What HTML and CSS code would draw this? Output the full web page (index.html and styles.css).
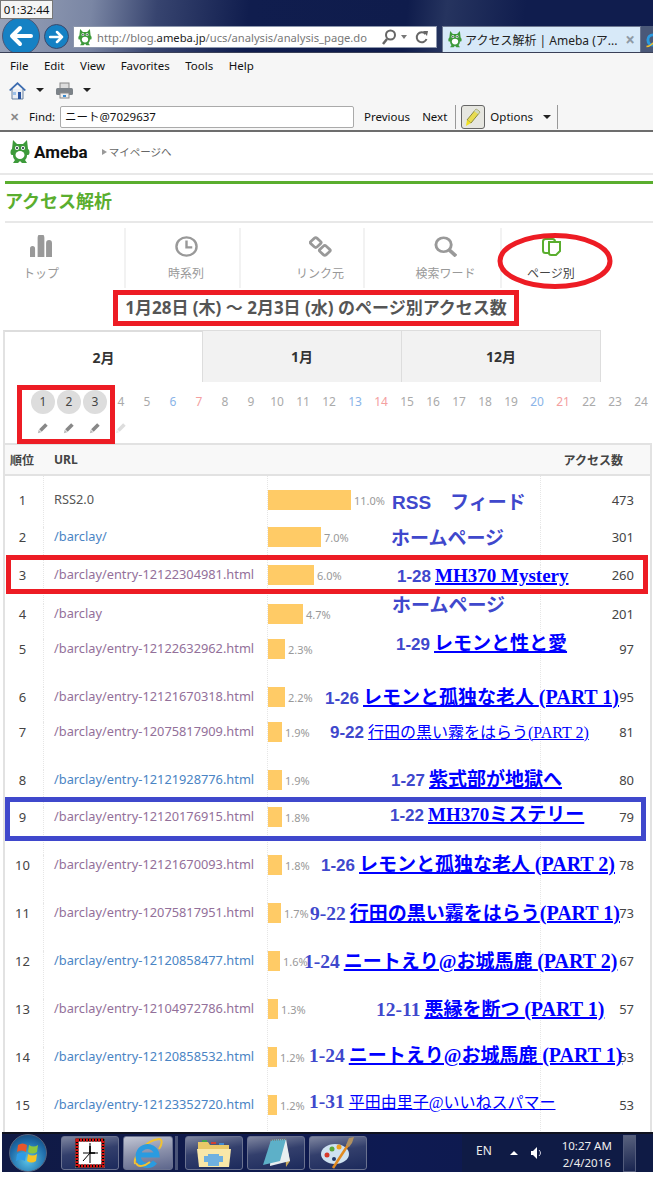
FILE: index.html
```html
<!DOCTYPE html>
<html lang="ja">
<head>
    <meta charset="UTF-8">
    <meta name="viewport" content="width=device-width, initial-scale=1.0">
    <link rel="stylesheet" href="styles.css">
    <title>アクセス解析 | Ameba</title>
</head>
<body>

<svg class="defs" width="0" height="0">
    <symbol id="ameba" viewBox="0 0 20 24">
        <path fill="#3d9a3a" d="M3 0l4 4h6l4-4 1 9c2 1 2 6 0 6l-1 0c0 3-1 4-2 5l2 3h-5l-2-2-2 2H3l2-3c-1-1-2-2-2-5H2C0 15 0 10 2 9z"/>
        <ellipse fill="#fff" cx="10" cy="15" rx="4.500" ry="4"/>
        <circle fill="#fff" cx="7" cy="8" r="2"/>
        <circle fill="#fff" cx="13" cy="8" r="2"/>
        <circle fill="#123" cx="7" cy="8" r="1"/>
        <circle fill="#123" cx="13" cy="8" r="1"/>
    </symbol>
    <symbol id="pencil" viewBox="0 0 14 14">
        <path fill="currentColor" d="M9.500 1.500l3 3-7 7-3-3z"/>
        <path fill="currentColor" opacity=".6" d="M2 9l3 3-4 1z"/>
    </symbol>
</svg>

<div class="screen">

    <!-- browser frame -->
    <div class="clock-box">01:32:44</div>

    <div class="nav-bar">
        <div class="btn-back">
            <svg width="24" height="22" viewBox="0 0 24 22"><path fill="none" stroke="#fff" stroke-width="4" stroke-linecap="round" stroke-linejoin="round" d="M22 11H4M11 3l-8 8 8 8"/></svg>
        </div>
        <div class="btn-forward">
            <svg width="15" height="14" viewBox="0 0 15 14"><path fill="none" stroke="#fff" stroke-width="2.500" stroke-linecap="round" stroke-linejoin="round" d="M1 7h12M8 2l5 5-5 5"/></svg>
        </div>
        <div class="address">
            <svg class="fav" width="14" height="17"><use href="#ameba"/></svg>
            <span class="url">http://blog.<b>ameba.jp</b>/ucs/analysis/analysis_page.do</span>
            <svg class="addr-icon" width="16" height="16" viewBox="0 0 16 16"><circle cx="9.500" cy="6" r="4.500" fill="none" stroke="#666" stroke-width="2"/><path d="M6 10l-4 5" stroke="#666" stroke-width="2.500"/></svg>
            <span class="addr-caret"></span>
            <svg class="addr-icon" width="13" height="15" viewBox="0 0 13 15"><path d="M10.500 4A5 5 0 1 0 11.500 9" fill="none" stroke="#666" stroke-width="2"/><path fill="#666" d="M8 1l5 0-1 5z"/></svg>
        </div>
        <div class="tab-active">
            <svg class="fav" width="14" height="17"><use href="#ameba"/></svg>
            <span class="tab-title">アクセス解析 | Ameba (ア...</span>
            <span class="tab-close">×</span>
        </div>
        <div class="tab-new">
            <svg width="16" height="16" viewBox="0 0 22 22"><circle cx="11" cy="11" r="7" fill="none" stroke="#2a9be0" stroke-width="4"/><path d="M2 20C8 20 18 10 20 2" fill="none" stroke="#f0c030" stroke-width="2"/></svg>
        </div>
    </div>

    <div class="menu-bar">
        <span>File</span><span>Edit</span><span>View</span><span>Favorites</span><span>Tools</span><span>Help</span>
    </div>

    <div class="tool-bar">
        <svg width="17" height="19" viewBox="0 0 17 19"><path fill="#e9edf3" stroke="#67809f" d="M3 8v10h11V8"/><path fill="#3c6cb0" d="M8.500 1L0 9l1.500 1 7-6.500 7 6.500L17 9z"/><rect fill="#2a55a0" x="9" y="11" width="3" height="7"/><rect fill="#9cc0e8" x="4" y="11" width="3" height="3"/></svg>
        <span class="caret"></span>
        <svg class="printer" width="17" height="17" viewBox="0 0 17 17"><rect fill="#ddd" stroke="#888" x="4" y="1" width="9" height="6"/><rect fill="#7c8288" x="0" y="6" width="17" height="7" rx="1.500"/><rect fill="#eee" stroke="#888" x="4" y="11" width="9" height="5"/><rect fill="#3a8ad0" x="7" y="13" width="3" height="2"/></svg>
        <span class="caret"></span>
    </div>

    <div class="find-bar">
        <span class="find-x">✕</span>
        <span class="find-label">Find:</span>
        <div class="find-input">ニート@7029637</div>
        <span class="find-link">Previous</span>
        <span class="find-link find-next">Next</span>
        <span class="find-sep"></span>
        <div class="find-mark">
            <svg width="18" height="20" viewBox="0 0 18 20"><path fill="#e8dc50" stroke="#8a8a40" d="M12 2l4 3-9 11-4-3z"/><path fill="#f0e020" d="M3 13l4 3-5 3z"/><path fill="#cfd8c0" d="M12 2l4 3-2 2-4-3z"/></svg>
        </div>
        <span class="find-link find-options">Options</span>
        <span class="caret"></span>
        <span class="find-sep find-sep-end"></span>
    </div>

    <!-- page -->
    <div class="page">
        <div class="site-header">
            <svg width="20" height="24"><use href="#ameba"/></svg>
            <span class="logo-text">Ameba</span>
            <span class="mypage"><i class="mypage-arrow"></i>マイページへ</span>
        </div>

        <div class="report">
            <h1 class="report-title">アクセス解析</h1>

            <div class="report-nav">
                <div class="nav-item nav-top">
                    <svg width="22" height="22" viewBox="0 0 26 24" preserveAspectRatio="none"><path fill="#999" d="M0 15a3 3 0 0 1 6 0v9H0zM9 3a4 4 0 0 1 8 0v21H9zM19 9a3.500 3.500 0 0 1 7 0v15h-7z"/></svg>
                    <span>トップ</span>
                </div>
                <div class="nav-item nav-time">
                    <svg width="23" height="21" viewBox="0 0 24 24" preserveAspectRatio="none"><circle cx="12" cy="12" r="10.500" fill="none" stroke="#999" stroke-width="2.500"/><path d="M12 5v8h6" fill="none" stroke="#999" stroke-width="2.500"/></svg>
                    <span>時系列</span>
                </div>
                <div class="nav-item nav-link">
                    <svg width="23" height="21" viewBox="0 0 24 24" preserveAspectRatio="none"><g fill="none" stroke="#999" stroke-width="3"><rect x="2.500" y="3" width="9" height="9" rx="2" transform="rotate(45 7 7.500)"/><rect x="12" y="12" width="9" height="9" rx="2" transform="rotate(45 16.500 16.500)"/></g></svg>
                    <span>リンク元</span>
                </div>
                <div class="nav-item nav-word">
                    <svg width="23" height="21" viewBox="0 0 24 24" preserveAspectRatio="none"><circle cx="10" cy="10" r="8" fill="none" stroke="#999" stroke-width="3"/><path d="M16 16l7 7" stroke="#999" stroke-width="4"/></svg>
                    <span>検索ワード</span>
                </div>
                <div class="nav-item nav-page">
                    <svg width="19" height="18" viewBox="0 0 19 18"><g fill="#fff" stroke="#5aae2e" stroke-width="2"><rect x="1" y="1" width="12" height="14" rx="2.500"/><path d="M7 4h11v9l-4 4H9a2 2 0 0 1-2-2z"/></g></svg>
                    <span>ページ別</span>
                </div>
            </div>
        </div>

        <h2 class="period">1月28日 (木) ～ 2月3日 (水) のページ別アクセス数</h2>

        <div class="panel">
            <div class="months">
                <div class="month active">2月</div>
                <div class="month">1月</div>
                <div class="month">12月</div>
                <div class="month-rest"></div>
            </div>

            <div class="days">
                <div class="day on">1<svg class="pen" width="12" height="12"><use href="#pencil"/></svg></div>
                <div class="day on">2<svg class="pen" width="12" height="12"><use href="#pencil"/></svg></div>
                <div class="day on">3<svg class="pen" width="12" height="12"><use href="#pencil"/></svg></div>
                <div class="day">4<svg class="pen pen-faint" width="12" height="12"><use href="#pencil"/></svg></div>
                <div class="day">5</div>
                <div class="day sat">6</div>
                <div class="day sun">7</div>
                <div class="day">8</div>
                <div class="day">9</div>
                <div class="day">10</div>
                <div class="day">11</div>
                <div class="day">12</div>
                <div class="day sat">13</div>
                <div class="day sun">14</div>
                <div class="day">15</div>
                <div class="day">16</div>
                <div class="day">17</div>
                <div class="day">18</div>
                <div class="day">19</div>
                <div class="day sat">20</div>
                <div class="day sun">21</div>
                <div class="day">22</div>
                <div class="day">23</div>
                <div class="day">24</div>
            </div>

            <div class="stats-head">
                <span class="head-rank">順位</span>
                <span class="head-url">URL</span>
                <span class="head-count">アクセス数</span>
            </div>

            <div class="stats">
                <div class="row"><div class="rank">1</div><div class="path plain">RSS2.0</div><div class="graph"><i class="bar" style="width:83px"></i><span class="pct">11.0%</span></div><div class="count">473</div></div>
                <div class="row"><div class="rank">2</div><div class="path new">/barclay/</div><div class="graph"><i class="bar" style="width:53px"></i><span class="pct">7.0%</span></div><div class="count">301</div></div>
                <div class="row"><div class="rank">3</div><div class="path">/barclay/entry-12122304981.html</div><div class="graph"><i class="bar" style="width:46px"></i><span class="pct">6.0%</span></div><div class="count">260</div></div>
                <div class="row"><div class="rank">4</div><div class="path">/barclay</div><div class="graph"><i class="bar" style="width:35px"></i><span class="pct">4.7%</span></div><div class="count">201</div></div>
                <div class="row"><div class="rank">5</div><div class="path">/barclay/entry-12122632962.html</div><div class="graph"><i class="bar" style="width:17px"></i><span class="pct">2.3%</span></div><div class="count">97</div></div>
                <div class="row"><div class="rank">6</div><div class="path">/barclay/entry-12121670318.html</div><div class="graph"><i class="bar" style="width:17px"></i><span class="pct">2.2%</span></div><div class="count">95</div></div>
                <div class="row"><div class="rank">7</div><div class="path">/barclay/entry-12075817909.html</div><div class="graph"><i class="bar" style="width:14px"></i><span class="pct">1.9%</span></div><div class="count">81</div></div>
                <div class="row"><div class="rank">8</div><div class="path new">/barclay/entry-12121928776.html</div><div class="graph"><i class="bar" style="width:14px"></i><span class="pct">1.9%</span></div><div class="count">80</div></div>
                <div class="row"><div class="rank">9</div><div class="path">/barclay/entry-12120176915.html</div><div class="graph"><i class="bar" style="width:14px"></i><span class="pct">1.8%</span></div><div class="count">79</div></div>
                <div class="row"><div class="rank">10</div><div class="path">/barclay/entry-12121670093.html</div><div class="graph"><i class="bar" style="width:14px"></i><span class="pct">1.8%</span></div><div class="count">78</div></div>
                <div class="row"><div class="rank">11</div><div class="path">/barclay/entry-12075817951.html</div><div class="graph"><i class="bar" style="width:13px"></i><span class="pct">1.7%</span></div><div class="count">73</div></div>
                <div class="row"><div class="rank">12</div><div class="path new">/barclay/entry-12120858477.html</div><div class="graph"><i class="bar" style="width:12px"></i><span class="pct">1.6%</span></div><div class="count">67</div></div>
                <div class="row"><div class="rank">13</div><div class="path">/barclay/entry-12104972786.html</div><div class="graph"><i class="bar" style="width:10px"></i><span class="pct">1.3%</span></div><div class="count">57</div></div>
                <div class="row"><div class="rank">14</div><div class="path new">/barclay/entry-12120858532.html</div><div class="graph"><i class="bar" style="width:9px"></i><span class="pct">1.2%</span></div><div class="count">53</div></div>
                <div class="row"><div class="rank">15</div><div class="path new">/barclay/entry-12123352720.html</div><div class="graph"><i class="bar" style="width:9px"></i><span class="pct">1.2%</span></div><div class="count">53</div></div>
            </div>
        </div>
    </div>

    <!-- hand drawn marks on top of the page -->
    <svg class="mark-ellipse" width="116" height="58" viewBox="0 0 116 58"><ellipse cx="58" cy="29" rx="55" ry="25.500" fill="none" stroke="#ed1c24" stroke-width="5"/></svg>
    <div class="mark mark-days"></div>
    <div class="mark mark-row3"></div>
    <div class="mark mark-row9"></div>

    <div class="note note-1"><span class="tag big">RSS　フィード</span></div>
    <div class="note note-2"><span class="tag big">ホームページ</span></div>
    <div class="note note-3"><span class="tag">1-28</span><a class="title">MH370 Mystery</a></div>
    <div class="note note-4"><span class="tag big">ホームページ</span></div>
    <div class="note note-5"><span class="tag">1-29</span><a class="title">レモンと性と愛</a></div>
    <div class="note note-6"><span class="tag">1-26</span><a class="title">レモンと孤独な老人 <span class="part">(PART 1)</span></a></div>
    <div class="note note-7"><span class="tag">9-22</span><a class="title thin">行田の黒い霧をはらう(PART 2)</a></div>
    <div class="note note-8"><span class="tag">1-27</span><a class="title">紫式部が地獄へ</a></div>
    <div class="note note-9"><span class="tag">1-22</span><a class="title">MH370ミステリー</a></div>
    <div class="note note-10"><span class="tag">1-26</span><a class="title">レモンと孤独な老人 <span class="part">(PART 2)</span></a></div>
    <div class="note note-11"><span class="tag serif">9-22</span><a class="title">行田の黒い霧をはらう<span class="part">(PART 1)</span></a></div>
    <div class="note note-12"><span class="tag serif">1-24</span><a class="title">ニートえり@お城馬鹿 <span class="part">(PART 2)</span></a></div>
    <div class="note note-13"><span class="tag serif">12-11</span><a class="title">悪縁を断つ <span class="part">(PART 1)</span></a></div>
    <div class="note note-14"><span class="tag serif">1-24</span><a class="title">ニートえり@お城馬鹿 <span class="part">(PART 1)</span></a></div>
    <div class="note note-15"><span class="tag serif">1-31</span><a class="title thin">平田由里子@いいねスパマー</a></div>

    <!-- windows taskbar -->
    <div class="taskbar">
        <div class="orb">
            <svg width="24" height="22" viewBox="0 0 24 22"><path fill="#e8562a" d="M2 3c3-2 6-2 9 0l-1 7c-3-2-6-2-9 0z"/><path fill="#8cc63f" d="M13 3c3 2 6 2 9 0l-1 7c-3 2-6 2-9 0z"/><path fill="#2e9be6" d="M1 12c3-2 6-2 9 0l-1 7c-3-2-6-2-9 0z"/><path fill="#f7c325" d="M12 12c3 2 6 2 9 0l-1 7c-3 2-6 2-9 0z"/></svg>
        </div>
        <div class="task task-clock">
            <svg width="30" height="30" viewBox="0 0 30 30"><rect x="0" y="0" width="30" height="30" fill="#8a8a8a"/><rect x="2" y="2" width="26" height="26" fill="#fff" stroke="#000" stroke-width="3"/><rect x="2" y="2" width="26" height="26" fill="none" stroke="#d81010" stroke-width="3" stroke-dasharray="2 1"/><path d="M15 5v20M8 15h15M15 15l-7 8" stroke="#000" stroke-width="1" fill="none"/><path d="M15 8v7l5 0" stroke="#000" stroke-width="1.500" fill="none"/></svg>
        </div>
        <div class="task task-ie">
            <svg width="34" height="34" viewBox="0 0 34 34"><path d="M4 28C2 22 14 4 28 3c4 0 3 6 0 10" fill="none" stroke="#f2c230" stroke-width="2"/><path fill="none" stroke="#2a9be0" stroke-width="5" d="M7 19h19a9.500 9.500 0 1 0-2 7"/><path d="M5 27c2 5 9 3 14-1" fill="none" stroke="#f2c230" stroke-width="2"/></svg>
        </div>
        <div class="task-grip"></div>
        <div class="task task-folder">
            <svg width="34" height="30" viewBox="0 0 34 30"><path fill="#e9c868" d="M1 4h10l2 3h19v6H1z"/><rect fill="#3fa34d" x="5" y="2" width="5" height="2"/><rect fill="#d04030" x="14" y="4" width="5" height="2"/><rect fill="#4088d0" x="22" y="5" width="5" height="2"/><path fill="#f9e7a8" d="M0 11h34l-2 18H2z"/><path fill="#6fb0e0" d="M7 24v-6h4v-2h11v2h4v6H22v4H11v-4z"/></svg>
        </div>
        <div class="task task-note">
            <svg width="34" height="32" viewBox="0 0 34 32"><path fill="#c9a95a" d="M26 2l5 22-4 6z"/><path fill="#e8eef0" d="M12 3l15-1 4 22-20 5z"/><path fill="#5db0c8" d="M12 3l15-1-6 22-17 4z"/><path d="M12 3l15-1" stroke="#777" stroke-width="2" stroke-dasharray="1 1"/></svg>
        </div>
        <div class="task task-paint">
            <svg width="36" height="32" viewBox="0 0 36 32"><ellipse cx="15" cy="17" rx="14" ry="10" fill="#cfe2f0"/><circle cx="7" cy="18" r="2.500" fill="#d83a2a"/><circle cx="12" cy="12" r="2.500" fill="#5aa83a"/><circle cx="19" cy="10" r="2.500" fill="#f0a020"/><circle cx="14" cy="22" r="2" fill="#223a6a"/><path d="M13 31L28 8" stroke="#e08a20" stroke-width="2.500"/><path fill="#b09060" d="M26 8l3-7 5-1-2 6-3 4z"/></svg>
        </div>
        <div class="tray">
            <span class="tray-lang">EN</span>
            <span class="tray-up"></span>
            <svg class="tray-sound" width="12" height="14" viewBox="0 0 12 14"><path fill="#fff" d="M0 5h2l4-4v12l-4-4H0z"/><path d="M8 4c2 2 2 4 0 6" stroke="#ccd" fill="none"/></svg>
            <div class="tray-clock">
                <div>10:27 AM</div>
                <div>2/4/2016</div>
            </div>
            <div class="show-desktop"></div>
        </div>
    </div>

</div>

</body>
</html>
```

FILE: styles.css
```css
body{
    margin: 0;
    background-color: white;
    font-family: "Noto Sans", "Liberation Sans", "Noto Sans CJK JP", sans-serif;
    color: #333;
}
.defs{
    position: absolute;
}
.screen{
    position: relative;
    width: 653px;
    height: 1200px;
    overflow: hidden;
    display: flex;
    flex-direction: column;
}

/* browser frame */
.clock-box{
    position: absolute;
    left: 0;
    top: 0;
    z-index: 2;
    box-sizing: border-box;
    width: 53px;
    height: 19px;
    background-color: #f4f4f4;
    border: 1px solid #777;
    font-size: 11.500px;
    line-height: 17px;
    text-align: center;
    color: #111;
}
.nav-bar{
    box-sizing: border-box;
    height: 53px;
    flex: none;
    display: flex;
    align-items: flex-end;
    overflow: hidden;
    border-bottom: 1px solid #3a4058;
    background: linear-gradient(96deg, #98a2b8 0, #7a86a4 14%, #37446f 24%, #101d4e 38%, #0f1c4c 62%, #26345f 68%, #101d4e 80%);
}
.btn-back{
    flex: none;
    width: 36px;
    height: 36px;
    margin: 0 0 -3px 2px;
    border-radius: 50%;
    background-color: #1581c4;
    border: 1px solid #4a5778;
    display: flex;
    align-items: center;
    justify-content: center;
}
.btn-forward{
    flex: none;
    width: 23px;
    height: 23px;
    margin: 0 0 3px 4px;
    border-radius: 50%;
    background-color: #1581c4;
    border: 1px solid #3c496c;
    display: flex;
    align-items: center;
    justify-content: center;
}
.fav{
    flex: none;
}
.address{
    box-sizing: border-box;
    flex: none;
    width: 364px;
    height: 22px;
    margin: 0 5px 4px 4px;
    padding: 0 3px 0 4px;
    display: flex;
    align-items: center;
    background-color: white;
    border: 1px solid #8d97ad;
}
.url{
    margin-left: 5px;
    width: 284px;
    font-size: 11.200px;
    color: #777;
    white-space: nowrap;
}
.url b{
    font-weight: normal;
    color: #222;
}
.addr-icon{
    flex: none;
}
.addr-caret{
    margin: 0 8px 0 4px;
    border-top: 4px solid #777;
    border-left: 3.500px solid transparent;
    border-right: 3.500px solid transparent;
}
.tab-active{
    box-sizing: border-box;
    flex: none;
    width: 199px;
    height: 26px;
    padding: 0 5px 0 5px;
    display: flex;
    align-items: center;
    background-color: #d7e9f8;
    border: 1px solid #6d7891;
    border-bottom: 0;
}
.tab-title{
    margin-left: 3px;
    flex: 1;
    min-width: 0;
    font-size: 12px;
    color: #222;
    white-space: nowrap;
}
.tab-close{
    font-size: 17px;
    font-weight: bold;
    line-height: 1;
    color: #8f9aa5;
}
.tab-new{
    box-sizing: border-box;
    flex: none;
    width: 13px;
    height: 26px;
    padding: 5px 0 0 4px;
    overflow: hidden;
    background-color: #4a5878;
}
.menu-bar, .tool-bar, .find-bar{
    flex: none;
    box-sizing: border-box;
    display: flex;
    align-items: center;
    background-color: #f6f6f6;
    font-size: 11.500px;
    color: #111;
}
.menu-bar{
    height: 26px;
    padding: 0 0 2px 10px;
    gap: 15.500px;
}
.tool-bar{
    height: 26px;
    padding: 0 0 4px 9px;
}
.caret{
    border-top: 4px solid #222;
    border-left: 4px solid transparent;
    border-right: 4px solid transparent;
    margin-left: 10px;
}
.printer{
    margin-left: 12px;
}
.find-bar{
    height: 27px;
    padding: 0 0 2px 10px;
    border-bottom: 2px solid #6d6d6d;
}
.find-x{
    font-size: 11px;
    font-weight: bold;
    color: #888;
    width: 19px;
}
.find-label{
    width: 31px;
}
.find-input{
    box-sizing: border-box;
    width: 294px;
    height: 22px;
    padding-left: 4px;
    line-height: 20px;
    background-color: white;
    border: 1px solid #aaa;
    border-radius: 2px;
    font-size: 11.500px;
}
.find-link{
    margin-left: 10px;
}
.find-next{
    margin-left: 12px;
}
.find-options{
    margin-left: 5px;
}
.find-sep{
    width: 1px;
    height: 24px;
    margin: 0 5px 0 8px;
    background-color: #999;
}
.find-sep-end{
    margin-left: 6px;
}
.find-mark{
    box-sizing: border-box;
    width: 24px;
    height: 24px;
    display: flex;
    align-items: center;
    justify-content: center;
    background-color: #e6e6e0;
    border: 1px solid #666;
    border-radius: 3px;
}

/* page */
.page{
    flex: none;
    height: 1000px;
    overflow: hidden;
    background-color: white;
}
.site-header{
    box-sizing: border-box;
    height: 43px;
    padding: 0 0 2px 10px;
    display: flex;
    align-items: center;
    border-bottom: 2px solid #e8e8e8;
}
.logo-text{
    margin-left: 4px;
    font-family: Roboto, sans-serif;
    font-size: 17px;
    font-weight: bold;
    color: #111;
}
.mypage{
    margin-left: 14px;
    font-size: 10.500px;
    color: #666;
    display: flex;
    align-items: center;
}
.mypage-arrow{
    margin-right: 2px;
    border-left: 5px solid #999;
    border-top: 3.500px solid transparent;
    border-bottom: 3.500px solid transparent;
}
.report{
    margin: 6px 0 0 5px;
    border-top: 3px solid #5aae2e;
}
.report-title{
    margin: 0;
    height: 37px;
    line-height: 34px;
    font-size: 18px;
    color: #5aae2e;
    border-bottom: 2px solid #e8e8e8;
}
.report-nav{
    margin-top: 5px;
    height: 60px;
    display: flex;
}
.nav-item{
    box-sizing: border-box;
    display: flex;
    flex-direction: column;
    align-items: center;
    gap: 7px;
    padding-top: 8px;
    font-size: 12px;
    color: #999;
    border-right: 2px solid #f2f2f2;
}
.nav-top{
    width: 121px;
    padding-right: 47px;
    padding-top: 7px;
}
.nav-time{
    width: 115px;
    padding-left: 7px;
}
.nav-link{
    width: 124px;
    padding-left: 36px;
}
.nav-word{
    width: 137px;
    padding-left: 26px;
}
.nav-page{
    width: 98px;
    border-right: 0;
    padding-top: 10px;
    gap: 8px;
    color: #444;
}
.period{
    box-sizing: border-box;
    width: 406px;
    height: 36px;
    margin: 2px 0 4px 113px;
    border: 5px solid #ed1c24;
    font-size: 17px;
    line-height: 25px;
    text-align: center;
    white-space: nowrap;
    color: #555;
}
.panel{
    margin-left: 3px;
    width: 649px;
}
.months{
    display: flex;
    height: 52px;
}
.month{
    box-sizing: border-box;
    width: 199px;
    line-height: 52px;
    text-align: center;
    font-size: 14px;
    font-weight: bold;
    color: #333;
    background-color: #f2f2f2;
    border: solid #ddd;
    border-width: 1px 1px 0 0;
}
.month.active{
    width: 200px;
    background-color: white;
    border-left: 2px solid #e2e2e2;
    border-top-width: 2px;
}
.month-rest{
    flex: 1;
}
.days{
    box-sizing: border-box;
    height: 61px;
    padding: 8px 0 0 26px;
    border-left: 2px solid #e2e2e2;
    display: flex;
}
.day{
    box-sizing: border-box;
    flex: none;
    width: 24px;
    height: 24px;
    margin-right: 2px;
    line-height: 24px;
    text-align: center;
    font-size: 12px;
    color: #aaa;
    border-radius: 50%;
    position: relative;
}
.day.on{
    background-color: #ddd;
    color: #444;
}
.day.sat{
    color: #8ab4e8;
}
.day.sun{
    color: #f4a0a0;
}
.pen{
    position: absolute;
    left: 6px;
    top: 32px;
    color: #888;
}
.pen-faint{
    color: #ddd;
}
.stats-head{
    box-sizing: border-box;
    height: 33px;
    display: flex;
    align-items: center;
    background-color: #f8f8f8;
    border: solid #e2e2e2;
    border-width: 2px;
    font-size: 12px;
    font-weight: bold;
    color: #444;
}
.head-rank{
    margin-left: 5px;
    width: 44px;
}
.head-url{
    flex: 1;
}
.head-count{
    margin-right: 27px;
}
.stats{
    display: grid;
    grid-template-columns: 39px 224px 273px 109px;
    grid-template-rows: 51px 38px 39px 35px 48px 35px 48px 37px 48px 48px 48px 48px 48px 48px 48px;
    border: solid #e2e2e2;
    border-width: 0 2px;
}
.row{
    display: contents;
}
.rank, .path, .graph, .count{
    display: flex;
    align-items: flex-start;
    line-height: 20px;
    font-size: 13px;
}
.row:first-child > div{
    padding-top: 14px;
}
.rank{
    justify-content: center;
    padding-right: 3px;
    color: #444;
    border-right: 1px dotted #e6e6e6;
}
.path{
    padding-left: 10px;
    font-size: 12.800px;
    line-height: 19px;
    white-space: nowrap;
    color: #93709a;
    border-right: 1px dotted #e6e6e6;
}
.path.plain{
    color: #555;
}
.path.new{
    color: #4a84c4;
}
.graph{
    border-right: 1px dotted #e6e6e6;
}
.bar{
    height: 20px;
    background-color: #ffcb66;
}
.pct{
    margin-left: 3px;
    font-size: 11px;
    line-height: 21px;
    color: #999;
}
.count{
    justify-content: flex-end;
    padding-right: 16px;
    color: #444;
}

/* hand drawn marks */
.mark{
    position: absolute;
    box-sizing: border-box;
    border: 5px solid #ed1c24;
}
.mark-ellipse{
    position: absolute;
    left: 497px;
    top: 232px;
}
.mark-days{
    left: 17px;
    top: 385px;
    width: 98px;
    height: 59px;
}
.mark-row3{
    left: 6px;
    top: 555px;
    width: 642px;
    height: 39px;
}
.mark-row9{
    left: 5px;
    top: 797px;
    width: 641px;
    height: 44px;
    border-color: #3f48cc;
}

/* added notes over the table */
.note{
    position: absolute;
    display: flex;
    align-items: baseline;
    height: 24px;
    line-height: 24px;
    white-space: nowrap;
}
.tag{
    font-family: "Liberation Sans", "Noto Sans CJK JP", sans-serif;
    font-size: 17px;
    font-weight: bold;
    color: #3f48cc;
}
.tag.big{
    font-size: 19px;
}
.tag.serif{
    font-family: "Liberation Serif", serif;
    font-size: 19.500px;
}
.title{
    margin-left: 4px;
    font-family: "Liberation Serif", "Noto Sans CJK JP", serif;
    font-size: 19px;
    font-weight: bold;
    color: #00f;
    text-decoration: underline;
    text-decoration-thickness: 2px;
}
.title.thin{
    font-size: 16px;
    font-weight: normal;
    text-decoration-thickness: 1px;
}
.part{
    font-size: 20px;
}
.note-1{ left: 392px; top: 491px; }
.note-2{ left: 391px; top: 527px; }
.note-3{ left: 397px; top: 564px; }
.note-4{ left: 392px; top: 594px; }
.note-5{ left: 396px; top: 632px; }
.note-6{ left: 325px; top: 685px; }
.note-7{ left: 330px; top: 721px; }
.note-8{ left: 391px; top: 768px; }
.note-9{ left: 390px; top: 803px; }
.note-10{ left: 321px; top: 852px; }
.note-11{ left: 310px; top: 901px; }
.note-12{ left: 304px; top: 949px; }
.note-13{ left: 376px; top: 997px; }
.note-14{ left: 309px; top: 1043px; }
.note-15{ left: 309px; top: 1090px; }

/* windows taskbar */
.taskbar{
    box-sizing: border-box;
    flex: none;
    height: 40px;
    margin-left: 2px;
    padding: 2px 0 2px 0;
    display: flex;
    align-items: stretch;
    background: linear-gradient(90deg, #101a45, #0e1a52 60%, #0f1a4a);
    border-top: 2px solid #10131f;
}
.orb{
    flex: none;
    width: 38px;
    height: 38px;
    margin: -2px 14px 0 7px;
    border-radius: 50%;
    background: radial-gradient(circle at 50% 70%, #5ac4e8, #1e6aa8 60%, #123a64);
    border: 1px solid #55647e;
    box-sizing: border-box;
    display: flex;
    align-items: center;
    justify-content: center;
}
.task{
    box-sizing: border-box;
    flex: none;
    width: 58px;
    margin-right: 4px;
    display: flex;
    align-items: center;
    justify-content: center;
    background: linear-gradient(170deg, #7f86a0 0, #333f6c 45%, #1c2a5c 100%);
    border: 1px solid #6a7290;
    border-radius: 3px;
}
.task-ie{
    width: 50px;
    margin-right: 2px;
    background: linear-gradient(170deg, #c2c6d4 0, #8a90aa 50%, #5d668c 100%);
}
.task-grip{
    flex: none;
    width: 3px;
    margin-right: 7px;
    background-color: #4a5478;
}
.tray{
    flex: 1;
    margin: -2px 0;
    margin-left: 91px;
    display: flex;
    align-items: center;
    background-color: #0f1b45;
    color: #eee;
    font-size: 12px;
}
.tray-lang{
    margin-left: 14px;
    margin-top: -5px;
}
.tray-up{
    margin: 0 0 0 18px;
    border-bottom: 4px solid #fff;
    border-left: 4px solid transparent;
    border-right: 4px solid transparent;
}
.tray-sound{
    margin-left: 13px;
}
.tray-clock{
    margin: 1px 0 0 12px;
    width: 64px;
    font-size: 11.500px;
    line-height: 17px;
    text-align: center;
}
.show-desktop{
    box-sizing: border-box;
    width: 13px;
    height: 37px;
    margin-left: 4px;
    background: linear-gradient(170deg, #59627e, #18244f);
    border: 1px solid #535c7c;
}
```
